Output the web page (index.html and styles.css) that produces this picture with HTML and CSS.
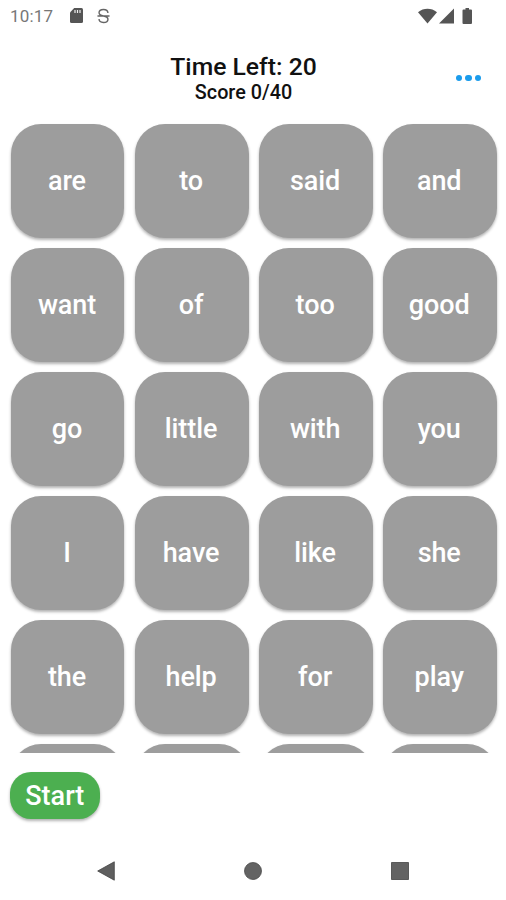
FILE: index.html
```html
<!DOCTYPE html>
<html lang="en">
<head>
<meta charset="utf-8">
<title>Sight Words</title>
<link rel="stylesheet" href="styles.css">
</head>
<body>
<div class="screen">
  <div class="status">
    <span class="clock">10:17</span>
    <svg class="sd" viewBox="0 0 13 15"><path fill="#555" d="M4.2 0H11.5Q13 0 13 1.500V13.500Q13 15 11.500 15H1.500Q0 15 0 13.500V4.500Z"/><path stroke="#eee" stroke-width="1.200" d="M5 2v3M7.500 2v3M10 2v3"/></svg>
    <svg class="ess" viewBox="0 0 14 16"><path fill="none" stroke="#666" stroke-width="1.500" d="M11.800 4.700C11.600 2.200 9.700 1 7 1S2.200 2.400 2.200 4.500C2.200 6.300 3.600 7.300 7 8S11.800 9.700 11.800 11.500C11.800 13.600 9.800 15 7 15S2.200 13.700 2.200 11.300M.5 8h13"/></svg>
    <span class="spacer"></span>
    <svg class="signals" viewBox="0 0 56 18"><g fill="#555"><path d="M0 5.200C5.600.600 13.400.600 19 5.200L9.500 16.500Z"/><path d="M36 1.500V16.500H21Z"/><path d="M47.500 1h3.500v1.500h2q1 0 1 1V16q0 1-1 1h-7.500q-1 0-1-1V3.500q0-1 1-1h2Z"/></g></svg>
  </div>
  <header class="header">
    <div class="titles">
      <h1 class="time">Time Left: 20</h1>
      <p class="score">Score 0/40</p>
    </div>
    <div class="more"><i></i><i></i><i></i></div>
  </header>
  <main class="board">
    <div class="tile">are</div><div class="tile">to</div><div class="tile">said</div><div class="tile">and</div>
    <div class="tile">want</div><div class="tile">of</div><div class="tile">too</div><div class="tile">good</div>
    <div class="tile">go</div><div class="tile">little</div><div class="tile">with</div><div class="tile">you</div>
    <div class="tile">I</div><div class="tile">have</div><div class="tile">like</div><div class="tile">she</div>
    <div class="tile">the</div><div class="tile">help</div><div class="tile">for</div><div class="tile">play</div>
    <div class="tile"></div><div class="tile"></div><div class="tile"></div><div class="tile"></div>
  </main>
  <div class="actions"><button class="start">Start</button></div>
  <nav class="nav">
    <svg class="back" viewBox="0 0 18 20"><path fill="#5f5f5f" stroke="#444" stroke-width=".8" d="M.700 10 17.300.800V19.200Z"/></svg>
    <svg class="home" viewBox="0 0 18 18"><circle cx="9" cy="9" r="8.500" fill="#636363" stroke="#4c4c4c" stroke-width=".8"/></svg>
    <svg class="recent" viewBox="0 0 18 18"><path fill="#636363" stroke="#444" stroke-width=".8" d="M.500.500h17v17H.500Z"/></svg>
  </nav>
</div>
</body>
</html>
```
FILE: styles.css
```css
* { box-sizing: border-box; }
body { margin: 0; background: #fff; font-family: Roboto, "Liberation Sans", sans-serif; }
.screen { width: 506px; height: 900px; display: flex; flex-direction: column; overflow: hidden; }
svg { display: block; flex: none; }
.status { height: 31px; display: flex; align-items: center; padding: 0 32px 0 10px; }
.clock { width: 60px; font-size: 17px; letter-spacing: .2px; color: #777; }
.sd { width: 13px; height: 15px; }
.ess { width: 13px; height: 16px; margin-left: 14px; }
.spacer { flex: 1; }
.signals { width: 56px; height: 18px; }
.header { height: 84px; display: flex; justify-content: space-between; padding: 22px 25px 0 0; }
.titles { width: 487px; margin-right: -31px; text-align: center; }
.time { margin: 0; font-size: 24.700px; line-height: 28px; font-weight: 500; color: #111; }
.score { margin: 0; font-size: 19.800px; line-height: 23px; font-weight: 500; color: #111; }
.more { display: flex; gap: 3px; padding-top: 22px; }
.more i { width: 6.300px; height: 6.300px; border-radius: 50%; background: #1b9cec; }
.board { height: 637.500px; padding: 8.500px 9.300px 0 10.500px; display: grid; grid-template-columns: repeat(4, 1fr); grid-auto-rows: 114px; gap: 10.100px; overflow: hidden; }
.tile { display: flex; align-items: center; justify-content: center; padding: 0 1px 0 0; border-radius: 30px; background: #9d9d9d; color: #fff; font-size: 27px; letter-spacing: -.1px; font-weight: 500; box-shadow: 0 2px 3px rgba(0, 0, 0, .3); }
.actions { padding: 19.500px 10.300px 0; height: 90px; }
.start { display: block; width: 90px; height: 47px; padding: 0 1px 0 0; border: 0; border-radius: 21px; background: #4caf50; color: #fff; font: 500 27px Roboto, "Liberation Sans", sans-serif; box-shadow: 0 2px 3px rgba(0, 0, 0, .3); }
.nav { display: flex; align-items: center; justify-content: space-between; height: 57px; padding: 0 97px; }
.back { width: 18px; height: 20px; }
.home, .recent { width: 18px; height: 18px; }
```
